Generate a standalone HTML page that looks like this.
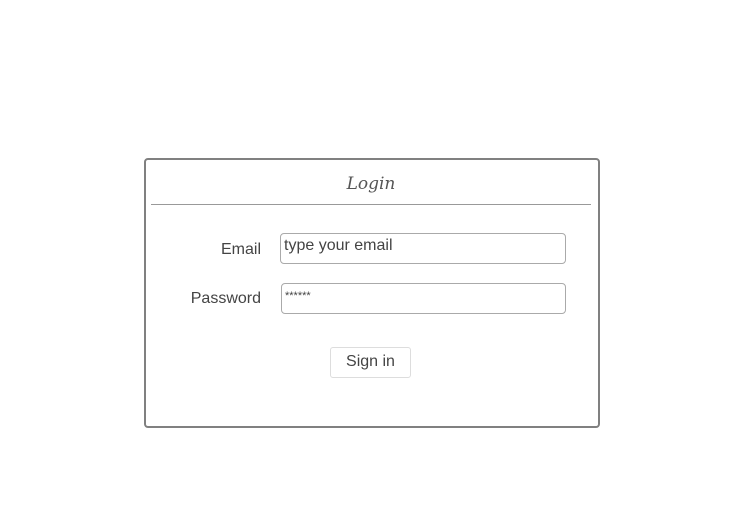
<!DOCTYPE html>
<html><head><style>
body{margin:0;width:754px;height:516px;background:#fff;position:relative;font-family:"Liberation Sans",sans-serif;color:#444;}
.a{position:absolute;}
.box{left:144px;top:158px;width:452px;height:266px;border:2px solid #808080;border-radius:4px;}
.line{left:151px;top:204px;width:440px;height:1px;background:#999;}
.title{left:340px;top:174px;width:62px;text-align:center;font-family:"DejaVu Serif",serif;font-style:italic;font-size:17px;color:#555;}
.lbl{font-size:16px;text-align:right;width:120px;}
.inp{border:1.5px solid #aaa;border-radius:4px;font-size:16px;box-sizing:border-box;padding:3px 3px;}
.btn{left:330px;top:347px;width:81px;height:31px;border:1px solid #ddd;border-radius:3px;box-sizing:border-box;text-align:center;line-height:27px;font-size:16px;}
</style></head><body>
<div class="a box"></div>
<div class="a line"></div>
<div class="a title">Login</div>
<div class="a lbl" style="left:141px;top:241px">Email</div>
<div class="a lbl" style="left:141px;top:290px">Password</div>
<div class="a inp" style="left:280px;top:233px;width:286px;height:31px">type your email</div>
<div class="a inp" style="left:281px;top:283px;width:285px;height:31px;font-size:11px;padding-top:6px">******</div>
<div class="a btn">Sign in</div>
</body></html>
